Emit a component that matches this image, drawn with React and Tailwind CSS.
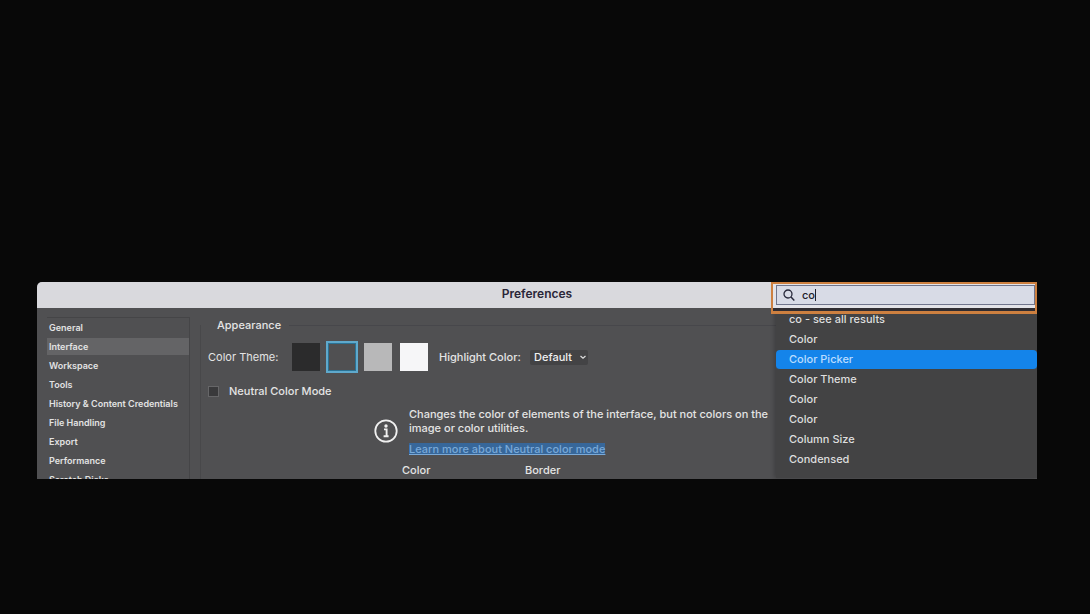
const categories = [
  'General',
  'Interface',
  'Workspace',
  'Tools',
  'History & Content Credentials',
  'File Handling',
  'Export',
  'Performance',
  'Scratch Disks',
];

const results = [
  'co - see all results',
  'Color',
  'Color Picker',
  'Color Theme',
  'Color',
  'Color',
  'Column Size',
  'Condensed',
];

const themes = [
  { name: 'Black', color: 'bg-[#2b2b2c]' },
  { name: 'Dark gray', color: 'bg-[#505052]', selected: true },
  { name: 'Light gray', color: 'bg-[#b8b8b9]' },
  { name: 'White', color: 'bg-[#f6f6f8]' },
];

function TitleBar() {
  return (
    <header className="h-[26px] bg-[#d9d9dd]">
      <h1 className="text-center text-[12px] leading-6 font-semibold text-[#2a2638]">Preferences</h1>
    </header>
  );
}

function Sidebar() {
  return (
    <nav aria-label="Categories" className="mt-[9px] ml-[10px] w-[143px] shrink-0 border-t border-r border-[#454547]">
      {categories.map((name) => (
        <button
          key={name}
          type="button"
          className={`flex h-[19px] w-full items-center border-y border-[#505052] pl-[2px] text-[9px] font-semibold whitespace-nowrap text-[#e2e2e2] ${
            name === 'Interface' ? 'bg-[#646466]' : ''
          }`}
        >
          {name}
        </button>
      ))}
    </nav>
  );
}

function InfoIcon() {
  return (
    <svg viewBox="0 0 24 24" className="size-6 shrink-0" fill="none" aria-hidden="true">
      <circle cx="12" cy="12" r="10.7" stroke="#f0f0f0" strokeWidth="1.8" />
      <circle cx="12" cy="7" r="1.7" fill="#f0f0f0" />
      <path d="M10 10.4h2.6v6.4M9.6 17.2h5" stroke="#f0f0f0" strokeWidth="1.9" />
    </svg>
  );
}

function Appearance() {
  return (
    <section className="mt-[17px] ml-[10px] min-w-0 flex-1 border-l border-[#48484a] text-[11px] font-medium text-[#e4e4e4]">
      <div className="-mt-2 flex h-4 items-center gap-2">
        <h2 className="ml-4">Appearance</h2>
        <span className="h-px flex-1 bg-[#47474b]" />
      </div>
      <div className="mt-2 ml-[7px] flex h-8 items-center">
        <span className="w-[84px] font-normal">Color Theme:</span>
        <div className="flex items-center gap-2">
          {themes.map((theme) => (
            <button
              key={theme.name}
              type="button"
              aria-label={theme.name}
              className={`size-7 ${theme.color} ${
                theme.selected ? 'outline-2 outline-[#5fa9cc] ring-1 ring-[#2b7294] ring-inset' : ''
              }`}
            />
          ))}
        </div>
        <label htmlFor="highlight" className="ml-[11px] w-[91px]">
          Highlight Color:
        </label>
        <span className="relative flex items-center">
          <select
            id="highlight"
            className="h-[15px] w-[58px] appearance-none rounded-xs bg-[#434345] pl-1 leading-[15px] text-[#f0f0f0]"
          >
            <option>Default</option>
          </select>
          <svg viewBox="0 0 8 8" className="pointer-events-none absolute right-px size-2" fill="none" aria-hidden="true">
            <path d="M1.5 3 4 5.3 6.5 3" stroke="#dedede" strokeWidth="1.2" />
          </svg>
        </span>
      </div>
      <label className="mt-[10px] ml-[7px] flex h-4 items-center gap-[10px]">
        <input type="checkbox" className="size-[11px] appearance-none border border-[#666668] bg-[#39393b]" />
        Neutral Color Mode
      </label>
      <div className="mt-2 ml-[173px] flex items-start gap-[11px]">
        <div className="mt-3">
          <InfoIcon />
        </div>
        <div className="leading-[14px]">
          <p className="whitespace-nowrap">
            Changes the color of elements of the interface, but not colors on the
            <br />
            image or color utilities.
          </p>
          <a href="#neutral" className="mt-2 block h-3 w-fit bg-[#37679a] leading-3 text-[#79a9d8] underline">
            Learn more about Neutral color mode
          </a>
        </div>
      </div>
      <div className="mt-[7px] ml-[201px] flex h-4 items-center">
        <span className="w-[123px]">Color</span>
        <span>Border</span>
      </div>
    </section>
  );
}

function Search() {
  return (
    <div className="absolute top-0 right-0 w-[266px]">
      <div className="relative z-10 border-2 border-b-[3px] border-[#cd8040] bg-[#e3e3e8]">
        <label className="mt-px ml-[3px] flex h-5 items-center gap-[7px] border border-[#70758c] bg-[#d8dbe6] pl-[6px]">
          <svg viewBox="0 0 12 12" className="size-3 shrink-0" fill="none" aria-hidden="true">
            <circle cx="5" cy="5" r="4" stroke="#28293b" strokeWidth="1.3" />
            <path d="m8 8 3.3 3.5" stroke="#28293b" strokeWidth="1.5" />
          </svg>
          <span className="flex items-center">
            <input
              type="text"
              defaultValue="co"
              aria-label="Search preferences"
              className="field-sizing-content bg-transparent text-[11px] leading-4 font-medium text-[#20202c] outline-none"
            />
            <span className="h-3 w-px bg-[#20202c]" />
          </span>
        </label>
        <div className="mt-[3px] h-[3px] bg-[#302d32]" />
      </div>
      <ul className="-mt-1 ml-[5px] h-[168px] bg-[#434344] shadow-[-2px_0_4px_rgba(0,0,0,0.2)]">
        {results.map((name, index) => (
          <li key={index}>
            <button
              type="button"
              className={`flex h-5 w-full items-center border-b border-[#434344] pl-[13px] text-[11px] font-medium ${
                name === 'Color Picker' ? 'rounded-sm bg-[#1484ea] text-[#b9dcff]' : 'text-[#dedede]'
              }`}
            >
              {name}
            </button>
          </li>
        ))}
      </ul>
    </div>
  );
}

export default function App() {
  return (
    <main className="min-h-screen bg-[#080808] px-[37px] pt-[282px] pb-8 font-['Inter',sans-serif]">
      <div className="relative mr-[16px] h-[197px] overflow-hidden rounded-tl-[5px] bg-[#505052]">
        <TitleBar />
        <div className="flex">
          <Sidebar />
          <Appearance />
        </div>
        <Search />
      </div>
    </main>
  );
}
